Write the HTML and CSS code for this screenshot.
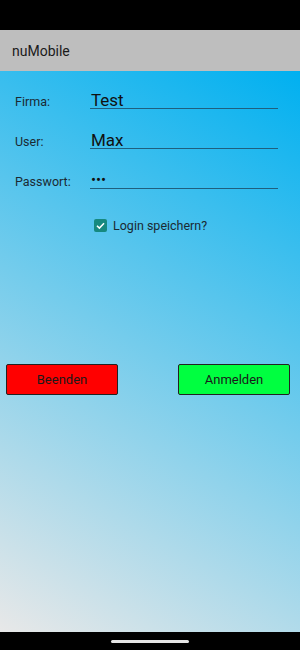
FILE: index.html
```html
<!doctype html>
<html lang="de">
<head>
  <meta charset="utf-8">
  <title>nuMobile</title>
  <meta name="viewport" content="width=device-width,initial-scale=1">
  <link rel="stylesheet" href="styles.css">
</head>
<body>
  <div class="screen">
    <div class="status-bar"></div>

    <header class="app-bar">nuMobile</header>

    <main class="content">
      <form class="login">
        <label class="row">
          <span class="label">Firma:</span>
          <span class="field">Test</span>
        </label>
        <label class="row">
          <span class="label">User:</span>
          <span class="field">Max</span>
        </label>
        <label class="row">
          <span class="label">Passwort:</span>
          <span class="field password">•••</span>
        </label>

        <div class="remember">
          <span class="checkbox" aria-hidden="true">
            <svg viewBox="0 0 14 14" width="14" height="14">
              <path d="M3.2 7.2l2.6 2.6 5-5.2" fill="none" stroke="#fff" stroke-width="1.6"/>
            </svg>
          </span>
          <span>Login speichern?</span>
        </div>

        <div class="actions">
          <button type="button" class="btn quit">Beenden</button>
          <button type="button" class="btn login-btn">Anmelden</button>
        </div>
      </form>
    </main>

    <!-- Navigation bar -->
    <div class="nav-bar"><span class="pill"></span></div>
  </div>
</body>
</html>
```

FILE: styles.css
```css
/* ---------- Reset ---------- */
*,*::before,*::after{box-sizing:border-box}
body{margin:0;background:#000;
     font-family:Roboto,"Noto Sans","Liberation Sans",sans-serif;
     color:#111}

.screen{width:300px;height:650px;display:flex;flex-direction:column}

/* ---------- System bars ---------- */
.status-bar{height:30px;background:#000}
.nav-bar{height:18px;background:#000;display:flex;align-items:center;justify-content:center}
.pill{width:78px;height:3px;border-radius:2px;background:#e6e6e6}

/* ---------- App bar ---------- */
.app-bar{height:41px;background:#bebebe;padding:1px 12px 0;
         display:flex;align-items:center;font-size:14px;color:#1a1a1a}

/* ---------- Content ---------- */
.content{flex:1;background:linear-gradient(210deg,#00b0f0 0%,#e8e8e8 100%)}

.login{display:flex;flex-direction:column;padding:15px 0 0}

.row{display:flex;align-items:flex-end;height:23px;margin-bottom:17px;padding:0 22px 0 15px}
.label{width:75px;font-size:12.5px;color:#1b2a33}
.field{flex:1;height:23px;border-bottom:1px solid #1f5f7e;
       font-size:17px;line-height:29px;padding-left:1px;color:#111}
.field.password{font-size:15px;letter-spacing:0;line-height:29px}

.remember{display:flex;align-items:center;gap:6px;margin:12px 0 0 94px;
          font-size:12.5px;color:#1b2a33}
.checkbox{width:13px;height:13px;border-radius:2px;background:#16897f;
          display:flex;align-items:center;justify-content:center}
.checkbox svg{width:13px;height:13px}

/* ---------- Buttons ---------- */
.actions{display:flex;justify-content:space-between;padding:0 10px 0 6px;margin-top:131px}
.btn{width:112px;height:31px;border:1px solid #222;border-radius:2px;
     font:13px Roboto,"Noto Sans",sans-serif;color:#1a1a1a;cursor:pointer}
.quit{background:#ff0000}
.login-btn{background:#00ff40}
```
